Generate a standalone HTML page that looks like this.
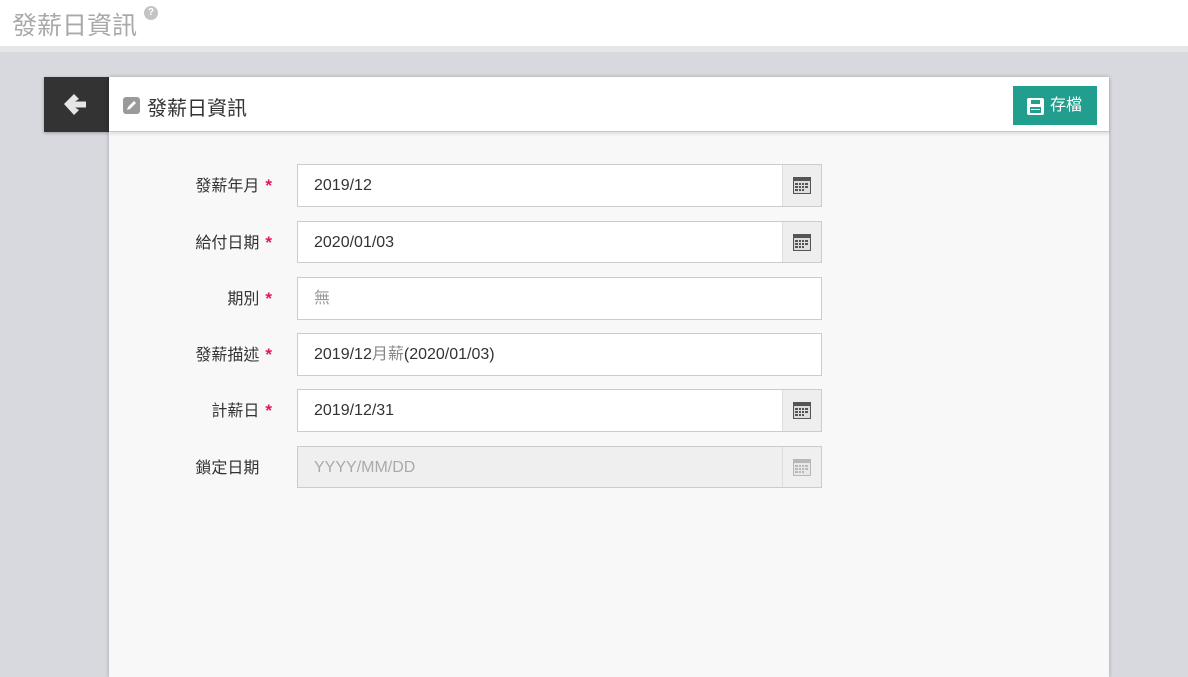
<!DOCTYPE html>
<html><head><meta charset="utf-8">
<style>
*{box-sizing:border-box;margin:0;padding:0}
body{width:1188px;height:661px;overflow:hidden;background:#d8d9df;font-family:"Liberation Sans","Noto Sans CJK TC",sans-serif;position:relative}
.top{position:absolute;left:0;top:0;width:1188px;height:46px;background:#fff}
.top h1{position:absolute;left:12px;top:6px;font-size:25px;font-weight:normal;color:#a9a9a9}
.q{position:absolute;left:144px;top:6px;width:14px;height:14px;border-radius:50%;background:#c4c4c4;color:#fff;font-size:10px;font-weight:bold;text-align:center;line-height:14px}
.bar{position:absolute;left:0;top:46px;width:1188px;height:6px;background:#e6e6e6}
.back{position:absolute;left:44px;top:77px;width:65px;height:55px;background:#333;box-shadow:0 1px 3px rgba(0,0,0,.3)}
.card{position:absolute;left:109px;top:77px;width:1000px;height:600px;background:#f8f8f8;box-shadow:0 0 4px rgba(0,0,0,.25)}
.hd{position:absolute;left:0;top:0;width:1000px;height:55px;background:#fff;border-bottom:1px solid #c8c8c8;box-shadow:0 2px 3px rgba(0,0,0,.1)}
.hd .t{position:absolute;left:38px;top:15px;font-size:20px;color:#333}
.pen{position:absolute;left:14px;top:20px;width:17px;height:17px;border-radius:3px;background:#9a9a9a}
.save{position:absolute;left:904px;top:9px;width:84px;height:39px;background:#229e8e;color:#fff;font-size:16px;line-height:39px;padding-left:37px}
.row{position:absolute;left:0;width:1000px;height:43px}
.lab{position:absolute;right:837px;top:0;line-height:43px;font-size:16px;color:#333;white-space:nowrap}
.lab b{color:#e4145d;font-weight:bold;margin-left:6px;font-size:17px}
.lab b.h{visibility:hidden}
.in{position:absolute;left:188px;top:0;width:525px;height:43px;background:#fff;border:1px solid #ccc;font-size:16px;color:#333;padding:0 0 0 16px;line-height:41px}
.in.dis{background:#efefef;color:#aaa}
.ad{position:absolute;right:0;top:0;width:39px;height:41px;background:#eee;border-left:1px solid #ddd}
.ad svg{position:absolute;left:10px;top:11px}
</style></head><body>
<div class="top"><h1>發薪日資訊</h1><div class="q">?</div></div>
<div class="bar"></div>
<div class="back"><svg width="65" height="55"><path d="M20 27 L30 17 L35 22 L31 24.5 L42 24.5 L42 30.5 L31 30.5 L35 33 L30 38 Z" fill="#e6e6e6"/></svg></div>
<div class="card">
<div class="hd"><div class="pen"><svg width="17" height="17"><path d="M4 13 L5 10 L11 4 L13 6 L7 12 Z" fill="#fff"/></svg></div><div class="t">發薪日資訊</div>
<div class="save"><svg style="position:absolute;left:14px;top:12px" width="17" height="17"><rect x="0" y="0" width="17" height="17" rx="2" fill="#fff"/><rect x="4" y="2" width="9" height="4" fill="#229e8e"/><rect x="3" y="9" width="11" height="6" fill="#229e8e"/><rect x="4" y="11" width="9" height="1" fill="#fff"/></svg>存檔</div></div>
<div class="row" style="top:87px"><div class="lab">發薪年月<b>*</b></div><div class="in">2019/12<div class="ad"><svg width="18" height="18"><rect x="0" y="1" width="18" height="17" fill="#555"/><rect x="1" y="5" width="16" height="12" fill="#ddd"/><g fill="#555"><rect x="2" y="7" width="3" height="2"/><rect x="6" y="7" width="2" height="2"/><rect x="9" y="7" width="2" height="2"/><rect x="12" y="7" width="3" height="2"/><rect x="2" y="10" width="3" height="2"/><rect x="6" y="10" width="2" height="2"/><rect x="9" y="10" width="2" height="2"/><rect x="12" y="10" width="3" height="2"/><rect x="2" y="13" width="3" height="2"/><rect x="6" y="13" width="2" height="2"/><rect x="9" y="13" width="2" height="2"/></g></svg></div></div></div>
<div class="row" style="top:144px"><div class="lab">給付日期<b>*</b></div><div class="in" style="height:42px">2020/01/03<div class="ad" style="height:40px"><svg width="18" height="18"><rect x="0" y="1" width="18" height="17" fill="#555"/><rect x="1" y="5" width="16" height="12" fill="#ddd"/><g fill="#555"><rect x="2" y="7" width="3" height="2"/><rect x="6" y="7" width="2" height="2"/><rect x="9" y="7" width="2" height="2"/><rect x="12" y="7" width="3" height="2"/><rect x="2" y="10" width="3" height="2"/><rect x="6" y="10" width="2" height="2"/><rect x="9" y="10" width="2" height="2"/><rect x="12" y="10" width="3" height="2"/><rect x="2" y="13" width="3" height="2"/><rect x="6" y="13" width="2" height="2"/><rect x="9" y="13" width="2" height="2"/></g></svg></div></div></div>
<div class="row" style="top:200px"><div class="lab">期別<b>*</b></div><div class="in" style="color:#999">無</div></div>
<div class="row" style="top:256px"><div class="lab">發薪描述<b>*</b></div><div class="in">2019/12<span style="color:#888">月薪</span>(2020/01/03)</div></div>
<div class="row" style="top:312px"><div class="lab">計薪日<b>*</b></div><div class="in">2019/12/31<div class="ad"><svg width="18" height="18"><rect x="0" y="1" width="18" height="17" fill="#555"/><rect x="1" y="5" width="16" height="12" fill="#ddd"/><g fill="#555"><rect x="2" y="7" width="3" height="2"/><rect x="6" y="7" width="2" height="2"/><rect x="9" y="7" width="2" height="2"/><rect x="12" y="7" width="3" height="2"/><rect x="2" y="10" width="3" height="2"/><rect x="6" y="10" width="2" height="2"/><rect x="9" y="10" width="2" height="2"/><rect x="12" y="10" width="3" height="2"/><rect x="2" y="13" width="3" height="2"/><rect x="6" y="13" width="2" height="2"/><rect x="9" y="13" width="2" height="2"/></g></svg></div></div></div>
<div class="row" style="top:369px"><div class="lab">鎖定日期<b class="h">*</b></div><div class="in dis" style="height:42px">YYYY/MM/DD<div class="ad" style="height:40px;background:#efefef"><svg width="18" height="18" opacity=".35"><rect x="0" y="1" width="18" height="17" fill="#555"/><rect x="1" y="5" width="16" height="12" fill="#ddd"/><g fill="#555"><rect x="2" y="7" width="3" height="2"/><rect x="6" y="7" width="2" height="2"/><rect x="9" y="7" width="2" height="2"/><rect x="12" y="7" width="3" height="2"/><rect x="2" y="10" width="3" height="2"/><rect x="6" y="10" width="2" height="2"/><rect x="9" y="10" width="2" height="2"/><rect x="12" y="10" width="3" height="2"/><rect x="2" y="13" width="3" height="2"/><rect x="6" y="13" width="2" height="2"/><rect x="9" y="13" width="2" height="2"/></g></svg></div></div></div>
</div>
</body></html>
